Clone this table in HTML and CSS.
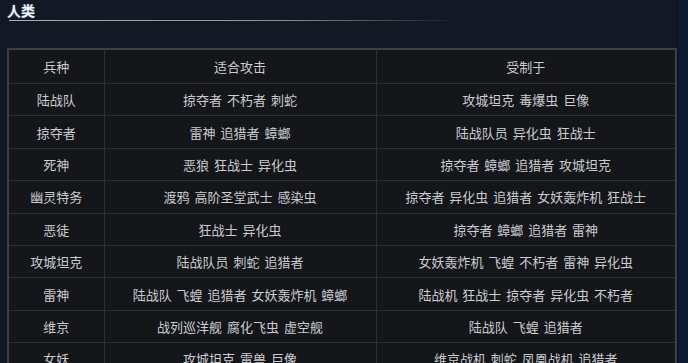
FILE: index.html
```html
<!DOCTYPE html>
<html lang="zh-CN">
<head>
<meta charset="utf-8">
<title>人类</title>
<link rel="stylesheet" href="styles.css">
</head>
<body>
<div class="page">
  <h2 class="title">人类</h2>
  <div class="rule"></div>
  <table class="units">
    <colgroup>
      <col class="c1"><col class="c2"><col class="c3">
    </colgroup>
    <thead>
      <tr><th>兵种</th><th>适合攻击</th><th>受制于</th></tr>
    </thead>
    <tbody>
      <tr><td>陆战队</td><td>掠夺者 不朽者 刺蛇</td><td>攻城坦克 毒爆虫 巨像</td></tr>
      <tr><td>掠夺者</td><td>雷神 追猎者 蟑螂</td><td>陆战队员 异化虫 狂战士</td></tr>
      <tr><td>死神</td><td>恶狼 狂战士 异化虫</td><td>掠夺者 蟑螂 追猎者 攻城坦克</td></tr>
      <tr><td>幽灵特务</td><td>渡鸦 高阶圣堂武士 感染虫</td><td>掠夺者 异化虫 追猎者 女妖轰炸机 狂战士</td></tr>
      <tr><td>恶徒</td><td>狂战士 异化虫</td><td>掠夺者 蟑螂 追猎者 雷神</td></tr>
      <tr><td>攻城坦克</td><td>陆战队员 刺蛇 追猎者</td><td>女妖轰炸机 飞蝗 不朽者 雷神 异化虫</td></tr>
      <tr><td>雷神</td><td>陆战队 飞蝗 追猎者 女妖轰炸机 蟑螂</td><td>陆战机 狂战士 掠夺者 异化虫 不朽者</td></tr>
      <tr><td>维京</td><td>战列巡洋舰 腐化飞虫 虚空舰</td><td>陆战队 飞蝗 追猎者</td></tr>
      <tr><td>女妖</td><td>攻城坦克 雷兽 巨像</td><td>维京战机 刺蛇 凤凰战机 追猎者</td></tr>
    </tbody>
  </table>
</div>
</body>
</html>
```

FILE: styles.css
```css
html, body {
  margin: 0;
  padding: 0;
}
body {
  background: #0e1a2f;
  font-family: "Noto Sans CJK SC", "Noto Sans", sans-serif;
  overflow: hidden;
}
.page {
  width: 677px;
  min-height: 363px;
  background: #121925;
  border-right: 1px solid #0b1220;
  padding-top: 1px;
}
.title {
  margin: 0 0 0 7px;
  height: 18px;
  font-size: 14px;
  line-height: 18px;
  font-weight: bold;
  color: #eef4fb;
  text-shadow: 0 0 2px rgba(160, 200, 240, 0.5);
}
.rule {
  margin: 1px 0 0 9px;
  width: 450px;
  height: 1px;
  background: linear-gradient(to right, #a9adb4 0%, #8e939b 60%, rgba(120, 125, 135, 0) 100%);
}
.units {
  margin: 27px 0 0 7px;
  width: 668px;
  border-collapse: collapse;
  background: #151619;
  border: 2px solid #3b3f48;
  table-layout: fixed;
}
.c1 { width: 96px; }
.c2 { width: 272px; }
.c3 { width: 300px; }
.units th, .units td {
  border: 1px solid #2c2f35;
  padding: 0;
  text-align: center;
  font-size: 13px;
  font-weight: normal;
  color: #c9cdd3;
  word-spacing: 2px;
  white-space: nowrap;
}
.units th {
  height: 33px;
}
.units td {
  height: 31.4px;
}
```
